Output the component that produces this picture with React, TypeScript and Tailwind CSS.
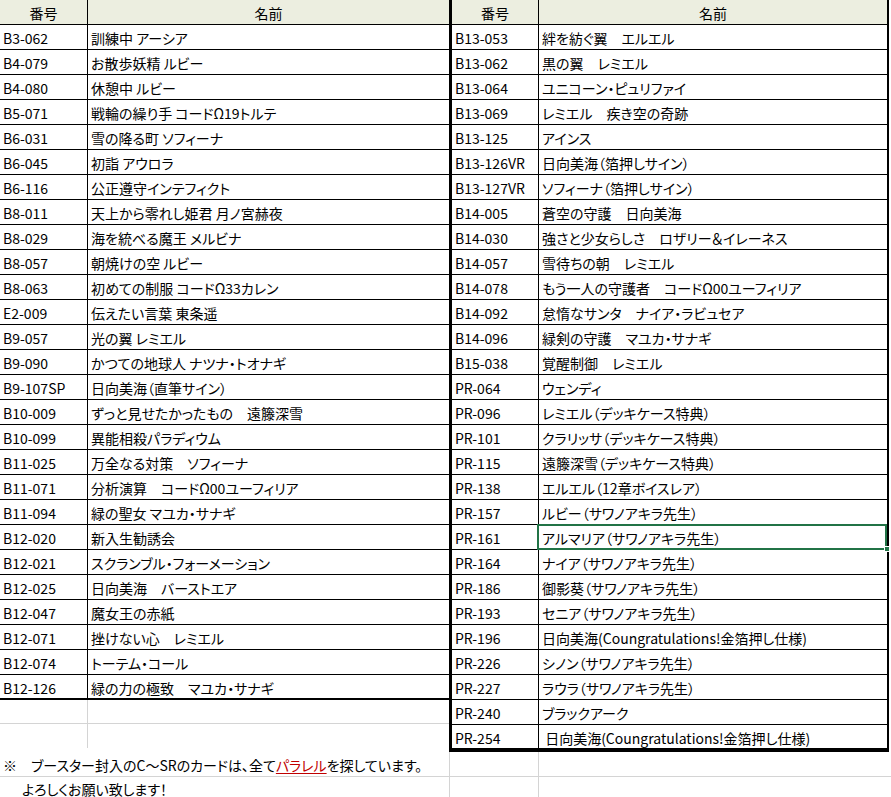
const left: [string, string][] = [
  ['B3-062', '訓練中 アーシア'],
  ['B4-079', 'お散歩妖精 ルビー'],
  ['B4-080', '休憩中 ルビー'],
  ['B5-071', '戦輪の繰り手 コードΩ19トルテ'],
  ['B6-031', '雪の降る町 ソフィーナ'],
  ['B6-045', '初詣 アウロラ'],
  ['B6-116', '公正遵守インテフィクト'],
  ['B8-011', '天上から零れし姫君 月ノ宮赫夜'],
  ['B8-029', '海を統べる魔王 メルビナ'],
  ['B8-057', '朝焼けの空 ルビー'],
  ['B8-063', '初めての制服 コードΩ33カレン'],
  ['E2-009', '伝えたい言葉 東条遥'],
  ['B9-057', '光の翼 レミエル'],
  ['B9-090', 'かつての地球人 ナツナ・トオナギ'],
  ['B9-107SP', '日向美海（直筆サイン）'],
  ['B10-009', 'ずっと見せたかったもの　遠籐深雪'],
  ['B10-099', '異能相殺パラディウム'],
  ['B11-025', '万全なる対策　ソフィーナ'],
  ['B11-071', '分析演算　コードΩ00ユーフィリア'],
  ['B11-094', '緑の聖女 マユカ・サナギ'],
  ['B12-020', '新入生勧誘会'],
  ['B12-021', 'スクランブル・フォーメーション'],
  ['B12-025', '日向美海　バーストエア'],
  ['B12-047', '魔女王の赤紙'],
  ['B12-071', '挫けない心　レミエル'],
  ['B12-074', 'トーテム・コール'],
  ['B12-126', '緑の力の極致　マユカ・サナギ'],
];

const right: [string, string][] = [
  ['B13-053', '絆を紡ぐ翼　エルエル'],
  ['B13-062', '黒の翼　レミエル'],
  ['B13-064', 'ユニコーン・ピュリファイ'],
  ['B13-069', 'レミエル　疾き空の奇跡'],
  ['B13-125', 'アインス'],
  ['B13-126VR', '日向美海（箔押しサイン）'],
  ['B13-127VR', 'ソフィーナ（箔押しサイン）'],
  ['B14-005', '蒼空の守護　日向美海'],
  ['B14-030', '強さと少女らしさ　ロザリー＆イレーネス'],
  ['B14-057', '雪待ちの朝　レミエル'],
  ['B14-078', 'もう一人の守護者　コードΩ00ユーフィリア'],
  ['B14-092', '怠惰なサンタ　ナイア・ラビュセア'],
  ['B14-096', '緑剣の守護　マユカ・サナギ'],
  ['B15-038', '覚醒制御　レミエル'],
  ['PR-064', 'ウェンディ'],
  ['PR-096', 'レミエル（デッキケース特典）'],
  ['PR-101', 'クラリッサ（デッキケース特典）'],
  ['PR-115', '遠籐深雪（デッキケース特典）'],
  ['PR-138', 'エルエル（12章ボイスレア）'],
  ['PR-157', 'ルビー（サワノアキラ先生）'],
  ['PR-161', 'アルマリア（サワノアキラ先生）'],
  ['PR-164', 'ナイア（サワノアキラ先生）'],
  ['PR-186', '御影葵（サワノアキラ先生）'],
  ['PR-193', 'セニア（サワノアキラ先生）'],
  ['PR-196', '日向美海(Coungratulations!金箔押し仕様)'],
  ['PR-226', 'シノン（サワノアキラ先生）'],
  ['PR-227', 'ラウラ（サワノアキラ先生）'],
  ['PR-240', 'ブラックアーク'],
  ['PR-254', '\u00a0日向美海(Coungratulations!金箔押し仕様)'],
];

function Header({ numW }: { numW: string }) {
  return (
    <div className="flex h-[25px] border-b border-black bg-[#ECEEE0]">
      <div className={`${numW} flex shrink-0 items-center justify-center border-r border-black pt-[2px]`}>番号</div>
      <div className="flex flex-1 items-center justify-center pt-[2px]">名前</div>
    </div>
  );
}

function Row({
  num,
  name,
  numW,
  last,
  selected,
}: {
  num: string;
  name: string;
  numW: string;
  last?: boolean;
  selected?: boolean;
}) {
  return (
    <div className={`flex h-[25px] border-black ${last ? 'border-b-2' : 'border-b'}`}>
      <div className={`${numW} flex shrink-0 items-center whitespace-nowrap border-r border-black pl-[3px] pt-[2px]`}>
        {num}
      </div>
      <div className="relative flex flex-1 items-center whitespace-nowrap pl-[3px] pt-[2px]">
        {name}
        {selected && (
          <>
            <div className="pointer-events-none absolute -left-[2px] -top-[1px] -bottom-[1px] right-0 border-2 border-[#217346]" />
            <div className="absolute -bottom-[3px] -right-[3px] h-[6px] w-[6px] border border-white bg-[#217346]" />
          </>
        )}
      </div>
    </div>
  );
}

export default function App() {
  return (
    <div className="h-[797px] w-[891px] overflow-hidden bg-white text-[14px] leading-none text-black [font-family:'Noto_Sans_CJK_JP',sans-serif] [font-feature-settings:'palt']">
      <div className="flex">
        <div className="w-[449px] shrink-0">
          <Header numW="w-[88px]" />
          {left.map(([n, m], i) => (
            <Row key={n} num={n} name={m} numW="w-[88px]" last={i === left.length - 1} />
          ))}
          <div className="flex h-[24px] border-b border-[#d4d4d4]">
            <div className="w-[88px] border-r border-[#d4d4d4]" />
          </div>
          <div className="flex h-[24px]">
            <div className="w-[88px] border-r border-[#d4d4d4]" />
          </div>
        </div>
        <div className="w-[440px] shrink-0 border-b-2 border-l-[3px] border-r-2 border-black">
          <Header numW="w-[87px]" />
          {right.map(([n, m], i) => (
            <Row
              key={n}
              num={n}
              name={m}
              numW="w-[87px]"
              last={i === right.length - 1}
              selected={n === 'PR-161'}
            />
          ))}
        </div>
      </div>
      <div className="flex h-[25px] border-b border-[#d4d4d4]">
        <div className="flex w-[450px] shrink-0 items-center whitespace-nowrap border-r border-[#d4d4d4] pl-[3px] pt-[2px]">
          ※　ブースター封入のC～SRのカードは、全て
          <span className="text-[#c00000] underline underline-offset-2">パラレル</span>
          を探しています。
        </div>
        <div className="w-[89px] shrink-0 border-r border-[#d4d4d4]" />
      </div>
      <div className="flex h-[22px]">
        <div className="flex w-[450px] shrink-0 items-center whitespace-nowrap border-r border-[#d4d4d4] pl-[22px] pt-[1px]">
          よろしくお願い致します！
        </div>
        <div className="w-[89px] shrink-0 border-r border-[#d4d4d4]" />
      </div>
    </div>
  );
}
